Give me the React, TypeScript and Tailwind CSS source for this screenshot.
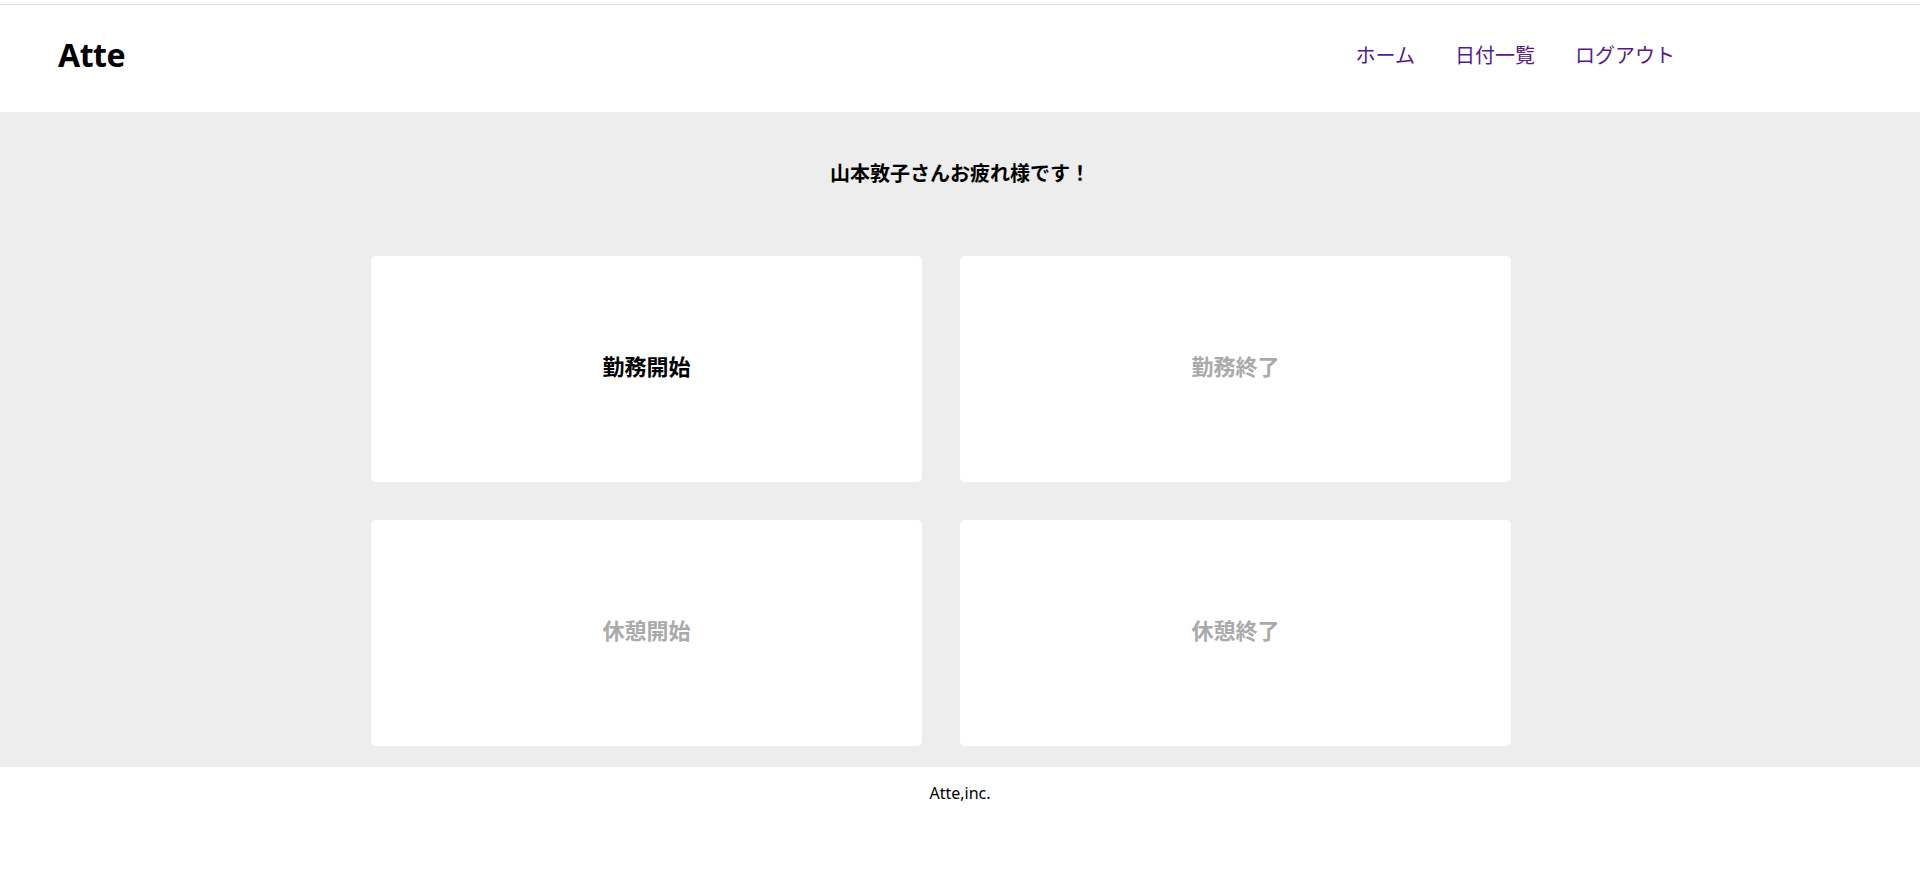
import React from "react";

const Card = ({ label, active }: { label: string; active?: boolean }) => (
  <div
    className={`h-[226px] bg-white rounded-[5px] flex items-center justify-center pb-[8px] text-[22px] font-bold leading-[30px] ${
      active ? "text-black" : "text-[#aaaaaa]"
    }`}
  >
    {label}
  </div>
);

export default function App() {
  return (
    <div className="w-[1920px] h-[880px] bg-white font-['Noto_Sans','Noto_Sans_CJK_JP',sans-serif] overflow-hidden">
      <div className="h-[4px]" />
      <header className="h-[108px] border-t border-[#dddddd] flex items-center justify-between pl-[58px] pr-[245px] pb-[7px]">
        <h1 className="text-[32px] font-bold leading-[40px] text-black tracking-[-0.5px]">Atte</h1>
        <nav className="flex gap-[40px] text-[20px] leading-[28px] text-[#551a8b] font-['Noto_Sans_CJK_JP',sans-serif]">
          <a>ホーム</a>
          <a>日付一覧</a>
          <a>ログアウト</a>
        </nav>
      </header>
      <main className="h-[655px] bg-[#ededed] pt-[46px]">
        <p className="text-center text-[20px] font-bold leading-[30px] text-black font-['Noto_Sans_CJK_JP',sans-serif]">
          山本敦子さんお疲れ様です！
        </p>
        <div className="mt-[68px] pl-[371px] grid grid-cols-[551px_551px] gap-[38px] font-['Noto_Sans_CJK_JP',sans-serif]">
          <Card label="勤務開始" active />
          <Card label="勤務終了" />
          <Card label="休憩開始" />
          <Card label="休憩終了" />
        </div>
      </main>
      <footer className="pt-[14px] text-center text-[16px] leading-[24px] text-black">
        Atte,inc.
      </footer>
    </div>
  );
}
